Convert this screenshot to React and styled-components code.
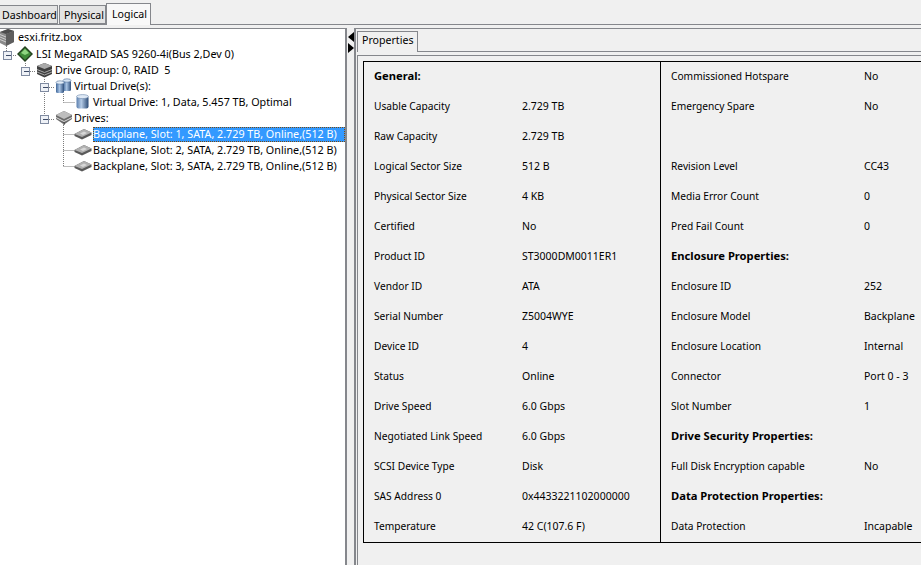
import React from 'react';
import styled, {createGlobalStyle} from 'styled-components';

const GlobalStyle = createGlobalStyle`
    html, body {
        margin: 0;
        padding: 0;
        height: 100%;
        overflow: hidden;
        background: #f0f0f0;
    }
    body {
        font-family: "Noto Sans", "Liberation Sans", sans-serif;
        font-size: 10.6px;
        color: #000;
    }
`

const Page = styled.div`
    width: 921px;
    height: 565px;
    display: flex;
    flex-direction: column;
    overflow: hidden;
`

const TabBar = styled.div`
    height: 25px;
    box-sizing: border-box;
    display: flex;
    align-items: flex-end;
    border-bottom: 1px solid #85878c;
`

const TopTab = styled.div`
    box-sizing: border-box;
    height: ${props => props.$active ? '22px' : '19px'};
    width: ${props => props.$width}px;
    margin-bottom: ${props => props.$active ? '-1px' : '0'};
    margin-left: ${props => props.$gap}px;
    padding: ${props => props.$active ? '3px 0 0 5px' : '2px 0 0 ' + props.$inset + 'px'};
    background: ${props => props.$active ? '#f8f8f8' : '#e4e4e4'};
    border: 1px solid #85878c;
    border-bottom: ${props => props.$active ? 'none' : '1px solid #85878c'};
    border-left: ${props => props.$flush ? 'none' : '1px solid #85878c'};
    white-space: nowrap;
    line-height: 15px;
`

const Split = styled.div`
    flex: 1;
    display: flex;
    padding-top: 3px;
    min-height: 0;
`

const TreePane = styled.div`
    position: relative;
    width: 347px;
    box-sizing: border-box;
    background: #fff;
    border-top: 1px solid #85878c;
    border-right: 2px solid #85878c;
    font-size: 10.75px;
`

const TreeRow = styled.div`
    height: ${props => props.$height || 16}px;
    display: flex;
    align-items: flex-start;
    padding-left: ${props => props.$indent}px;
    white-space: nowrap;
    line-height: 16px;
`

const IconSlot = styled.span`
    width: ${props => props.$width || 18}px;
    height: 16px;
    flex: none;
    display: flex;
    align-items: center;
`

const TreeLabel = styled.span`
    position: relative;
    z-index: 1;
    box-sizing: border-box;
    height: ${props => props.$selected ? '15px' : '16px'};
    flex: ${props => props.$selected ? '1' : 'none'};
    margin-top: ${props => props.$selected ? '1px' : '0'};
    line-height: ${props => props.$selected ? '14px' : '16px'};
    color: ${props => props.$selected ? '#fff' : '#000'};
    background: ${props => props.$selected ? '#3399ff' : 'transparent'};
    outline: ${props => props.$selected ? '1px dotted #7a4a10' : 'none'};
    outline-offset: -1px;
`

const Guides = styled.svg`
    position: absolute;
    left: 0;
    top: 0;
    pointer-events: none;
`

const Divider = styled.div`
    width: 7px;
    flex: none;
    padding-top: 4px;
    display: flex;
    flex-direction: column;
    gap: 1px;
    align-items: flex-end;
`

const RightPane = styled.div`
    flex: 1;
    min-width: 0;
    display: flex;
    flex-direction: column;
    border-top: 1px solid #85878c;
    border-left: 2px solid #85878c;
`

const PropTabRow = styled.div`
    height: 22px;
    box-sizing: border-box;
    padding: 1px 0 0 1px;
    display: flex;
    align-items: flex-end;
`

const PropTab = styled.div`
    box-sizing: border-box;
    width: 61px;
    height: 21px;
    margin-bottom: -1px;
    padding: 0 0 0 4px;
    line-height: 16px;
    background: #f0f0f0;
    position: relative;
    z-index: 1;
    border: 1px solid #85878c;
    border-bottom: none;
`

const PropBody = styled.div`
    flex: 1;
    min-height: 0;
    margin-left: 1px;
    border-top: 1px solid #85878c;
    padding-top: 3px;
    display: flex;
    flex-direction: column;
`

const PropInner = styled.div`
    flex: 1;
    min-height: 0;
    border-top: 1px solid #85878c;
    border-left: 1px solid #85878c;
    padding: 5px 0 0 5px;
`

const PropTable = styled.div`
    width: 558px;
    height: 482px;
    box-sizing: border-box;
    border: 1px solid #000;
    border-right: none;
    display: grid;
    grid-template-columns: 297px 1fr;
`

const Column = styled.div`
    display: grid;
    grid-auto-rows: 30px;
    padding-left: 10px;
    border-right: ${props => props.$divider ? '1px solid #000' : 'none'};
`

const PropRow = styled.div`
    display: grid;
    grid-template-columns: ${props => props.$labelWidth}px 1fr;
    align-items: center;
    padding-bottom: 2px;
    white-space: nowrap;
    line-height: 16px;
`

const PropLabel = styled.span`
    font-size: 10.2px;
`

const PropValue = styled.span`
    font-size: 10.5px;
`

const Heading = styled.div`
    font-weight: 700;
    font-size: 11.2px;
    align-self: center;
    padding-bottom: 2px;
    white-space: nowrap;
    line-height: 16px;
`

const leftRows = [
    {heading: 'General:'},
    {label: 'Usable Capacity', value: '2.729 TB'},
    {label: 'Raw Capacity', value: '2.729 TB'},
    {label: 'Logical Sector Size', value: '512 B'},
    {label: 'Physical Sector Size', value: '4 KB'},
    {label: 'Certified', value: 'No'},
    {label: 'Product ID', value: 'ST3000DM0011ER1'},
    {label: 'Vendor ID', value: 'ATA'},
    {label: 'Serial Number', value: 'Z5004WYE'},
    {label: 'Device ID', value: '4'},
    {label: 'Status', value: 'Online'},
    {label: 'Drive Speed', value: '6.0 Gbps'},
    {label: 'Negotiated Link Speed', value: '6.0 Gbps'},
    {label: 'SCSI Device Type', value: 'Disk'},
    {label: 'SAS Address 0', value: '0x4433221102000000'},
    {label: 'Temperature', value: '42 C(107.6 F)'}
];

const rightRows = [
    {label: 'Commissioned Hotspare', value: 'No'},
    {label: 'Emergency Spare', value: 'No'},
    {label: '', value: ''},
    {label: 'Revision Level', value: 'CC43'},
    {label: 'Media Error Count', value: '0'},
    {label: 'Pred Fail Count', value: '0'},
    {heading: 'Enclosure Properties:'},
    {label: 'Enclosure ID', value: '252'},
    {label: 'Enclosure Model', value: 'Backplane'},
    {label: 'Enclosure Location', value: 'Internal'},
    {label: 'Connector', value: 'Port 0 - 3'},
    {label: 'Slot Number', value: '1'},
    {heading: 'Drive Security Properties:'},
    {label: 'Full Disk Encryption capable', value: 'No'},
    {heading: 'Data Protection Properties:'},
    {label: 'Data Protection', value: 'Incapable'}
];

const ServerIcon = () => (
    <svg width="14" height="17" viewBox="0 0 14 17">
        <path d="M0 3 L8 0 L14 2 L14 13 L6 17 L0 14 Z" fill="#8a8a8a"/>
        <path d="M0 3 L8 0 L14 2 L6 5 Z" fill="#4d4d4d"/>
        <path d="M6 5 L14 2 L14 13 L6 17 Z" fill="#5e5e5e"/>
        <path d="M0 5.5 L6 8 M0 8 L6 10.5 M0 10.5 L6 13" stroke="#cfcfcf" fill="none"/>
    </svg>
);

const ControllerIcon = () => (
    <svg width="16" height="16" viewBox="0 0 16 16">
        <path d="M8 0 L16 8 L8 16 L0 8 Z" fill="#24401f"/>
        <path d="M8 2 L14 8 L8 14 L2 8 Z" fill="#3f8a38"/>
        <path d="M8 3 L12 7 L8 9 L4 7 Z" fill="#8fd480"/>
    </svg>
);

const DriveGroupIcon = () => (
    <svg width="17" height="16" viewBox="0 0 17 16">
        <path d="M1 4 L8.5 1 L16 4 L16 12 L8.5 15.5 L1 12 Z" fill="#3f3f3f"/>
        <path d="M1 4 L8.5 1 L16 4 L8.5 7 Z" fill="#a9a9a9"/>
        <path d="M1 7.5 L8.5 10.5 L16 7.5 M1 10 L8.5 13 L16 10" stroke="#a8a8a8" fill="none"/>
    </svg>
);

const CylindersIcon = () => (
    <svg width="17" height="16" viewBox="0 0 17 16">
        <defs>
            <linearGradient id="cyl" x1="0" x2="1" y1="0" y2="0">
                <stop offset="0" stopColor="#3f6699"/>
                <stop offset="0.45" stopColor="#a9c4e4"/>
                <stop offset="1" stopColor="#2f4f7c"/>
            </linearGradient>
        </defs>
        <rect x="8" y="2" width="8" height="11" rx="1.5" fill="url(#cyl)"/>
        <ellipse cx="12" cy="2.5" rx="4" ry="1.7" fill="#d5e3f3" stroke="#54729b" strokeWidth="0.6"/>
        <rect x="1" y="4" width="8" height="11" rx="1.5" fill="url(#cyl)"/>
        <ellipse cx="5" cy="4.5" rx="4" ry="1.7" fill="#e3edf8" stroke="#54729b" strokeWidth="0.6"/>
    </svg>
);

const CylinderIcon = () => (
    <svg width="13" height="16" viewBox="0 0 13 16">
        <defs>
            <linearGradient id="cyl2" x1="0" x2="1" y1="0" y2="0">
                <stop offset="0" stopColor="#5b7fae"/>
                <stop offset="0.4" stopColor="#b5cbe6"/>
                <stop offset="1" stopColor="#2b4a75"/>
            </linearGradient>
        </defs>
        <rect x="0.5" y="2" width="12" height="12.5" rx="2" fill="url(#cyl2)"/>
        <ellipse cx="6.5" cy="2.6" rx="6" ry="2" fill="#dfe9f5" stroke="#6a86ab" strokeWidth="0.6"/>
    </svg>
);

const DrivesIcon = () => (
    <svg width="18" height="16" viewBox="0 0 18 16">
        <path d="M1 5 L9 1 L17 5 L17 9 L9 14.5 L1 9 Z" fill="#6a6a6a"/>
        <path d="M1 5 L9 1 L17 5 L9 9 Z" fill="#bdbdbd"/>
        <path d="M1 7.5 L9 11.5 L17 7.5" stroke="#dcdcdc" fill="none"/>
        <path d="M9 12 L9 15" stroke="#3f3f3f"/>
    </svg>
);

const DiskIcon = () => (
    <svg width="18" height="12" viewBox="0 0 18 12">
        <path d="M0.5 6 L10 1 L17.5 4.5 L17.5 7 L8 11.5 L0.5 8 Z" fill="#5a5a5a"/>
        <path d="M0.5 6 L10 1 L17.5 4.5 L8 9 Z" fill="#b0b0b0"/>
        <path d="M6 5.5 L10 3.5 L13 5 L9 7 Z" fill="#d8d8d8"/>
    </svg>
);

const Arrow = ({dir}) => (
    <svg width="6" height="10" viewBox="0 0 6 10">
        <path d={dir === 'left' ? 'M6 0 L0 5 L6 10 Z' : 'M0 0 L6 5 L0 10 Z'} fill="#000"/>
    </svg>
);

const Handle = ({x, y}) => (
    <g>
        <rect x={x - 3.5} y={y - 3.5} width="8" height="8" fill="#eef1f6" stroke="#7f8aa0"/>
        <path d={`M${x - 1} ${y + 0.5} h5`} stroke="#3c4a66"/>
    </g>
);

const guideLines = [
    'M6.5 17 V22', 'M25.5 34 V38', 'M44.5 50 V85', 'M63.5 65 V73.5', 'M63.5 73.5 H75',
    'M63.5 94 V137.5', 'M63.5 105.5 H75', 'M63.5 121.5 H75', 'M63.5 137.5 H75',
    'M11 26.5 H17', 'M30 42.5 H36', 'M49 58.5 H55', 'M49 90.5 H55'
];

const TreeGuides = () => (
    <Guides width="100" height="180">
        {guideLines.map(d => (
            <path key={d} d={d} stroke="#7c7c7c" strokeDasharray="1 1" fill="none"/>
        ))}
        <Handle x={7} y={26}/>
        <Handle x={25} y={42}/>
        <Handle x={44} y={58}/>
        <Handle x={44} y={90}/>
    </Guides>
);

const PropColumn = ({rows, labelWidth, divider}) => (
    <Column $divider={divider}>
        {rows.map((row, i) => row.heading
            ? <Heading key={i}>{row.heading}</Heading>
            : (
                <PropRow key={i} $labelWidth={labelWidth}>
                    <PropLabel>{row.label}</PropLabel>
                    <PropValue>{row.value}</PropValue>
                </PropRow>
            ))}
    </Column>
);

const App = () => {
    return (
        <Page>
            <GlobalStyle/>
            <TabBar>
                <TopTab $width={58} $gap={0} $inset={2} $flush>Dashboard</TopTab>
                <TopTab $width={47} $gap={1} $inset={4}>Physical</TopTab>
                <TopTab $width={45} $gap={0} $active>Logical</TopTab>
            </TabBar>
            <Split>
                <TreePane>
                    <TreeGuides/>
                    <TreeRow $indent={0} $height={17}>
                        <IconSlot><ServerIcon/></IconSlot>
                        <TreeLabel>esxi.fritz.box</TreeLabel>
                    </TreeRow>
                    <TreeRow $indent={17}>
                        <IconSlot $width={19}><ControllerIcon/></IconSlot>
                        <TreeLabel>LSI MegaRAID SAS 9260-4i(Bus 2,Dev 0)</TreeLabel>
                    </TreeRow>
                    <TreeRow $indent={36}>
                        <IconSlot $width={19}><DriveGroupIcon/></IconSlot>
                        <TreeLabel>Drive Group: 0, RAID&nbsp; 5</TreeLabel>
                    </TreeRow>
                    <TreeRow $indent={55}>
                        <IconSlot $width={19}><CylindersIcon/></IconSlot>
                        <TreeLabel>Virtual Drive(s):</TreeLabel>
                    </TreeRow>
                    <TreeRow $indent={76}>
                        <IconSlot $width={17}><CylinderIcon/></IconSlot>
                        <TreeLabel>Virtual Drive: 1, Data, 5.457 TB, Optimal</TreeLabel>
                    </TreeRow>
                    <TreeRow $indent={55}>
                        <IconSlot $width={19}><DrivesIcon/></IconSlot>
                        <TreeLabel>Drives:</TreeLabel>
                    </TreeRow>
                    <TreeRow $indent={74}>
                        <IconSlot $width={19}><DiskIcon/></IconSlot>
                        <TreeLabel $selected>Backplane, Slot: 1, SATA, 2.729 TB, Online,(512 B)</TreeLabel>
                    </TreeRow>
                    <TreeRow $indent={74}>
                        <IconSlot $width={19}><DiskIcon/></IconSlot>
                        <TreeLabel>Backplane, Slot: 2, SATA, 2.729 TB, Online,(512 B)</TreeLabel>
                    </TreeRow>
                    <TreeRow $indent={74}>
                        <IconSlot $width={19}><DiskIcon/></IconSlot>
                        <TreeLabel>Backplane, Slot: 3, SATA, 2.729 TB, Online,(512 B)</TreeLabel>
                    </TreeRow>
                </TreePane>
                <Divider>
                    <Arrow dir="left"/>
                    <Arrow dir="right"/>
                </Divider>
                <RightPane>
                    <PropTabRow>
                        <PropTab>Properties</PropTab>
                    </PropTabRow>
                    <PropBody>
                        <PropInner>
                            <PropTable>
                                <PropColumn rows={leftRows} labelWidth={148} divider/>
                                <PropColumn rows={rightRows} labelWidth={193}/>
                            </PropTable>
                        </PropInner>
                    </PropBody>
                </RightPane>
            </Split>
        </Page>
    );
};

export default App;
